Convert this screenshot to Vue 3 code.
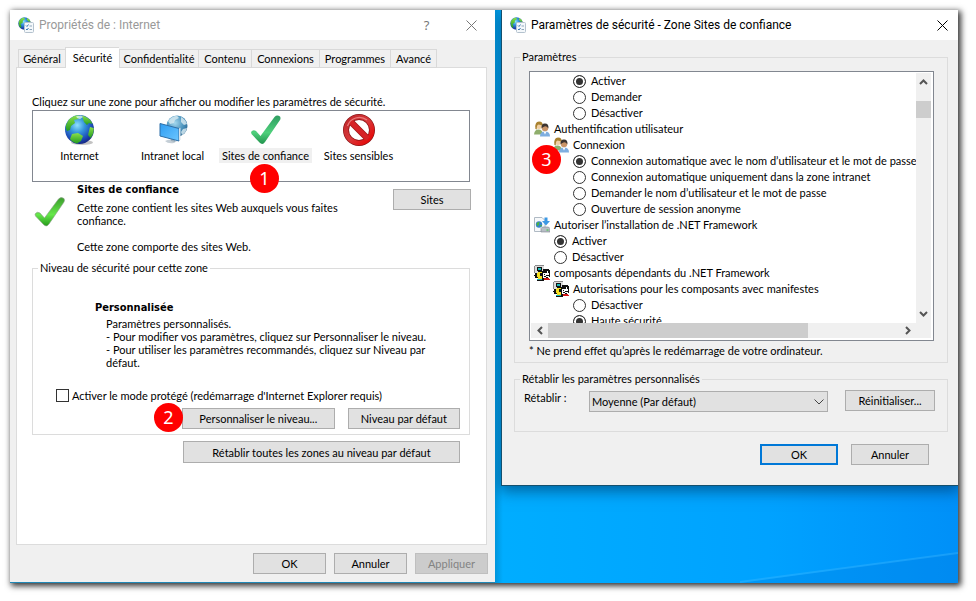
<script setup>
import { ref } from 'vue'

const tabs = ['Général', 'Sécurité', 'Confidentialité', 'Contenu', 'Connexions', 'Programmes', 'Avancé']
const activeTab = ref('Sécurité')

const zones = [
  { id: 'internet', label: 'Internet' },
  { id: 'intranet', label: 'Intranet local' },
  { id: 'trusted', label: 'Sites de confiance' },
  { id: 'restricted', label: 'Sites sensibles' }
]
const activeZone = ref('trusted')
const protectedMode = ref(false)

const rows = [
  { level: 2, group: 'a', label: 'Activer', on: true },
  { level: 2, group: 'a', label: 'Demander' },
  { level: 2, group: 'a', label: 'Désactiver' },
  { level: 0, icon: 'users', label: 'Authentification utilisateur' },
  { level: 1, icon: 'users', label: 'Connexion' },
  { level: 2, group: 'b', label: 'Connexion automatique avec le nom d’utilisateur et le mot de passe', on: true },
  { level: 2, group: 'b', label: 'Connexion automatique uniquement dans la zone intranet' },
  { level: 2, group: 'b', label: 'Demander le nom d’utilisateur et le mot de passe' },
  { level: 2, group: 'b', label: 'Ouverture de session anonyme' },
  { level: 0, icon: 'install', label: 'Autoriser l’installation de .NET Framework' },
  { level: 1, group: 'c', label: 'Activer', on: true },
  { level: 1, group: 'c', label: 'Désactiver' },
  { level: 0, icon: 'net', label: 'composants dépendants du .NET Framework' },
  { level: 1, icon: 'net', label: 'Autorisations pour les composants avec manifestes' },
  { level: 2, group: 'd', label: 'Désactiver' },
  { level: 2, group: 'd', label: 'Haute sécurité', on: true }
]
</script>

<template>
  <svg class="defs" width="0" height="0" aria-hidden="true">
    <defs>
      <radialGradient id="sea" cx="42%" cy="35%" r="65%">
        <stop offset="0" stop-color="#8fe0ff" />
        <stop offset=".4" stop-color="#3595dc" />
        <stop offset=".8" stop-color="#1b48b4" />
        <stop offset="1" stop-color="#162a88" />
      </radialGradient>
      <radialGradient id="ice" cx="40%" cy="35%" r="70%">
        <stop offset="0" stop-color="#a4d8ee" />
        <stop offset=".6" stop-color="#4b93bd" />
        <stop offset="1" stop-color="#2a6490" />
      </radialGradient>
      <linearGradient id="land" x1="0" y1="0" x2="0" y2="1">
        <stop offset="0" stop-color="#8be04a" />
        <stop offset="1" stop-color="#229a20" />
      </linearGradient>
      <linearGradient id="screen" x1="0" y1="0" x2="1" y2="1">
        <stop offset="0" stop-color="#2f9df2" />
        <stop offset="1" stop-color="#6cc6ff" />
      </linearGradient>
      <linearGradient id="tickSoft" x1="0" y1="0" x2="0" y2="1">
        <stop offset="0" stop-color="#2f9d62" />
        <stop offset=".6" stop-color="#4fd07c" />
        <stop offset="1" stop-color="#22944e" />
      </linearGradient>
      <linearGradient id="tickBright" x1="0" y1="0" x2="0" y2="1">
        <stop offset="0" stop-color="#3a9c2c" />
        <stop offset=".6" stop-color="#66e84a" />
        <stop offset="1" stop-color="#259a1a" />
      </linearGradient>
      <linearGradient id="ban" x1="0" y1="0" x2="1" y2="1">
        <stop offset="0" stop-color="#c0282c" />
        <stop offset=".5" stop-color="#d8383a" />
        <stop offset="1" stop-color="#e80000" />
      </linearGradient>

      <symbol id="i-app" viewBox="0 0 16 16">
        <circle cx="6.5" cy="6.5" r="6.2" fill="url(#sea)" />
        <path d="M1 4Q3 .8 6 .5L7 2 5 3.600 4.500 6 2.500 7 3.500 9.500 2.500 11Q0 8 1 4ZM9 1Q12 2 12.600 5L10.500 4.500 9 3Z" fill="url(#land)" />
        <rect x="6.500" y="5.500" width="9" height="10" rx="1" fill="#f4f8fb" stroke="#b4c2ce" />
        <path d="M8 8.500l1 1 1.500-2M8 12l1 1 1.500-2" fill="none" stroke="#3678b8" />
        <path d="M11.500 9h2.500M11.500 12.500h2.500" stroke="#8fa6bb" />
      </symbol>
      <symbol id="i-internet" viewBox="0 0 32 32">
        <ellipse cx="18" cy="28.500" rx="11" ry="2.500" fill="#9a9a9a" opacity=".6" />
        <circle cx="15.500" cy="15.500" r="14.500" fill="url(#sea)" />
        <path d="M2 11Q5 3 13 1.300L16 2 14 5 10 6 11 9 7 12 6 16 3 17Q1 14 2 11Z" fill="url(#land)" />
        <path d="M18 1.500Q24 3 27 7L28.500 10 25 9 23 11 20 8 19 5Z" fill="url(#land)" />
        <path d="M26 13L29.700 14Q30 20 26.500 24L24 21 25 17Z" fill="url(#land)" />
        <path d="M8 20L14 19 19 22 17 27 13 29.500Q8 28 6 25Z" fill="url(#land)" />
        <path d="M12 2.200L17 1.500 19 3 16 5 13 4Z" fill="#d8f4e8" opacity=".8" />
      </symbol>
      <symbol id="i-intranet" viewBox="0 0 32 32">
        <circle cx="20" cy="12" r="10.500" fill="url(#ice)" />
        <path d="M11 7Q15 2 20 1.800L22 4 18 6 17 9 13 10ZM24 3Q29 6 30 10L27 11 24 8ZM26 15L30 14Q29 19 25 21L24 18Z" fill="#d4e8f0" opacity=".85" />
        <path d="M8 27Q13 24 20 27L17 29Q11 30 8 27Z" fill="#c4ced6" />
        <path d="M13 22l5 2v4l-4-1z" fill="#9fb0bc" />
        <path d="M3 9.500L22 14.500V27L3 22Z" fill="url(#screen)" stroke="#2f6fa8" />
        <path d="M22 14.500l1.500-.8V25.500L22 27Z" fill="#d8e4ec" />
      </symbol>
      <symbol id="i-trusted" viewBox="0 0 32 32">
        <path d="M1 18Q3 15 6 17L10.500 22 24.500 3Q27 .5 30 2.500 31 4 30 6L15 28Q12.500 31.500 9.500 28.500L1.500 20Z" fill="url(#tickSoft)" />
      </symbol>
      <symbol id="i-check" viewBox="0 0 32 32">
        <path d="M1 18Q3 15 6 17L10.500 22 24.500 3Q27 .5 30 2.500 31 4 30 6L15 28Q12.500 31.500 9.500 28.500L1.500 20Z" fill="url(#tickBright)" stroke="#8a9a86" stroke-width=".6" />
      </symbol>
      <symbol id="i-restricted" viewBox="0 0 32 32">
        <circle cx="16" cy="16" r="13" fill="#fff" stroke="#8c1416" stroke-width="6" />
        <path d="M7.500 7.500L24.500 24.500" stroke="#9c1416" stroke-width="6.400" />
        <circle cx="16" cy="16" r="13" fill="none" stroke="url(#ban)" stroke-width="4.600" />
        <path d="M7 7L25 25" stroke="#d62226" stroke-width="5" />
        <path d="M4.500 12A12.500 12.500 0 0 1 24 6" fill="none" stroke="#f09090" stroke-width="1.200" opacity=".8" />
      </symbol>
      <symbol id="i-users" viewBox="0 0 16 16">
        <path d="M0 13.500Q.5 8.500 4.500 8.500T9 13.500Z" fill="#8fae6c" />
        <circle cx="5" cy="4.500" r="3.400" fill="#f0cfa4" />
        <path d="M1.400 8Q.6 .5 5 .5T8.600 5Q7 3.500 4.500 3.500 2.500 4 2.800 8.500Z" fill="#a9822f" />
        <path d="M6 15.500Q6 10.500 11 10.500T16 15.500Z" fill="#7eaee0" />
        <path d="M9.500 10.500l1.500 3 1.500-3z" fill="#fff" />
        <circle cx="11" cy="7" r="3.200" fill="#c99468" />
        <path d="M7.600 7.500Q7 2.500 11 2.600T14.400 7.500Q13 5 10.500 5.400 8.800 5.600 7.600 7.500Z" fill="#3c3430" />
      </symbol>
      <symbol id="i-install" viewBox="0 0 16 16">
        <path d="M.5.5H8L11 3.500V14.500H.5Z" fill="#f7f9fb" stroke="#b0bac4" />
        <circle cx="5" cy="7.500" r="3.200" fill="#3784cc" />
        <path d="M2.500 6.500Q4 4.500 5.500 5L5 7.500 3.500 9.500ZM6 8l2 0-1 2z" fill="#4db43c" />
        <path d="M10.500.5h3V4H16L12 8.500 8 4h2.500z" fill="#3c98e4" />
        <path d="M7 11.500l1.500-1.500h6l1.500 1.500v3.500H7z" fill="#b8bec6" stroke="#7d858e" stroke-width=".6" />
        <path d="M12.500 13h2" stroke="#37c837" />
      </symbol>
      <symbol id="i-net" viewBox="0 0 16 16" shape-rendering="crispEdges">
        <path d="M1 0H10V1H1ZM0 1H1V8H0Z" fill="#8a8a8a" />
        <path d="M1 1H10V8H1Z" fill="#dcdcdc" />
        <path d="M3 2H8V6H3Z" fill="#111" />
        <path d="M4 3H7V5H4Z" fill="#18b8b8" />
        <path d="M1 8H4V10H1ZM0 10H3V11H0ZM1 11H4V13H1Z" fill="#111" />
        <path d="M4 6H9V14H4ZM9 4H15V8H9ZM15 5H16V12H15Z" fill="#111" />
        <path d="M4 7H8V8H4ZM3 8H6V12H3ZM4 12H8V14H4ZM6 11H8V12H6Z" fill="#f6e020" />
        <path d="M9 8H13V13H9ZM13 6H14V10H13Z" fill="#fff" />
        <path d="M10 9H11V10H10ZM12 10H15V11H12ZM10 11H12V12H10Z" fill="#111" />
        <path d="M3 14H8V15H3Z" fill="#18b8b8" />
        <path d="M3 15H9V16H3ZM8 13H10V16H8ZM12 12H14V13H12Z" fill="#111" />
        <path d="M10 13H15V14H16V15H10Z" fill="#d01818" />
      </symbol>
    </defs>
  </svg>

  <main class="desktop">
    <svg class="ray" viewBox="0 0 215 32" preserveAspectRatio="none" aria-hidden="true">
      <path d="M0 32L215 2V32Z" fill="#007fe0" opacity=".3" />
      <path d="M0 31L215 2" stroke="#3cb8ff" stroke-width="2" opacity=".4" />
    </svg>

    <section class="window internet">
      <header class="titlebar muted">
        <svg class="app-icon"><use href="#i-app" /></svg>
        <h1>Propriétés de : Internet</h1>
        <button class="caption help" type="button" aria-label="Aide">?</button>
        <button class="caption" type="button" aria-label="Fermer">
          <svg width="11" height="11" viewBox="0 0 11 11"><path d="M.5.500l10 10M10.500.500l-10 10" /></svg>
        </button>
      </header>

      <div class="tabs" role="tablist">
        <button
          v-for="t in tabs"
          :key="t"
          type="button"
          role="tab"
          class="tab"
          :class="{ active: t === activeTab }"
          :aria-selected="t === activeTab"
          @click="activeTab = t"
        >{{ t }}</button>
      </div>

      <div class="panel">
        <p class="intro">Cliquez sur une zone pour afficher ou modifier les paramètres de sécurité.</p>
        <div class="zones">
          <button
            v-for="z in zones"
            :key="z.id"
            type="button"
            class="zone"
            :class="{ active: z.id === activeZone }"
            @click="activeZone = z.id"
          >
            <svg class="zone-icon"><use :href="'#i-' + z.id" /></svg>
            <span>{{ z.label }}</span>
          </button>
          <span class="badge one">1</span>
        </div>

        <div class="detail">
          <svg class="zone-icon"><use href="#i-check" /></svg>
          <div class="detail-text">
            <h2>Sites de confiance</h2>
            <p>Cette zone contient les sites Web auxquels vous faites<br>confiance.<br><br>Cette zone comporte des sites Web.</p>
          </div>
          <button class="btn sites" type="button">Sites</button>
        </div>

        <fieldset class="level">
          <legend>Niveau de sécurité pour cette zone</legend>
          <div class="custom">
            <h2>Personnalisée</h2>
            <p>Paramètres personnalisés.<br>- Pour modifier vos paramètres, cliquez sur Personnaliser le niveau.<br>- Pour utiliser les paramètres recommandés, cliquez sur Niveau par<br>défaut.</p>
          </div>
          <label class="protect">
            <input v-model="protectedMode" type="checkbox">
            Activer le mode protégé (redémarrage d'Internet Explorer requis)
          </label>
          <div class="level-buttons">
            <button class="btn wide" type="button">Personnaliser le niveau...</button>
            <button class="btn mid" type="button">Niveau par défaut</button>
            <span class="badge two">2</span>
          </div>
        </fieldset>
        <div class="reset-row">
          <button class="btn" type="button">Rétablir toutes les zones au niveau par défaut</button>
        </div>
      </div>

      <footer class="footer">
        <button class="btn" type="button">OK</button>
        <button class="btn" type="button">Annuler</button>
        <button class="btn" type="button" disabled>Appliquer</button>
      </footer>
    </section>

    <section class="window security">
      <header class="titlebar">
        <svg class="app-icon"><use href="#i-app" /></svg>
        <h1>Paramètres de sécurité - Zone Sites de confiance</h1>
        <button class="caption" type="button" aria-label="Fermer">
          <svg width="11" height="11" viewBox="0 0 11 11"><path d="M.5.500l10 10M10.500.500l-10 10" /></svg>
        </button>
      </header>

      <div class="content">
        <fieldset class="settings">
          <legend>Paramètres</legend>
          <div class="tree">
            <div class="rows">
              <component
                :is="r.group ? 'label' : 'div'"
                v-for="(r, i) in rows"
                :key="i"
                class="row"
                :class="'level-' + r.level"
              >
                <input v-if="r.group" type="radio" :name="'setting-' + r.group" :checked="r.on">
                <svg v-else class="row-icon"><use :href="'#i-' + r.icon" /></svg>
                <span>{{ r.label }}</span>
              </component>
            </div>
            <div class="vbar">
              <button type="button" aria-label="Défiler vers le haut"><svg width="9" height="6" viewBox="0 0 9 6"><path d="M1 5l3.500-3.500L8 5" /></svg></button>
              <div class="track"><div class="thumb"></div></div>
              <button type="button" aria-label="Défiler vers le bas"><svg width="9" height="6" viewBox="0 0 9 6"><path d="M1 1l3.500 3.500L8 1" /></svg></button>
            </div>
            <div class="hbar">
              <button type="button" aria-label="Défiler vers la gauche"><svg width="6" height="9" viewBox="0 0 6 9"><path d="M5 1L1.500 4.500 5 8" /></svg></button>
              <div class="track"><div class="thumb"></div></div>
              <button type="button" aria-label="Défiler vers la droite"><svg width="6" height="9" viewBox="0 0 6 9"><path d="M1 1l3.500 3.500L1 8" /></svg></button>
            </div>
            <div class="corner"></div>
            <span class="badge three">3</span>
          </div>
          <p class="note">* Ne prend effet qu’après le redémarrage de votre ordinateur.</p>
        </fieldset>

        <fieldset class="restore">
          <legend>Rétablir les paramètres personnalisés</legend>
          <div class="restore-row">
            <label for="restore-level">Rétablir :</label>
            <span class="select">
              <select id="restore-level">
                <option>Moyenne (Par défaut)</option>
              </select>
              <svg width="10" height="6" viewBox="0 0 10 6"><path d="M.5.500L5 5 9.500.500" /></svg>
            </span>
            <button class="btn" type="button">Réinitialiser...</button>
          </div>
        </fieldset>

        <div class="actions">
          <button class="btn primary" type="button">OK</button>
          <button class="btn" type="button">Annuler</button>
        </div>
      </div>
    </section>
  </main>
</template>

<style>
body {
  background: #fff;
}
</style>

<style scoped>
.defs {
  position: absolute;
}
.desktop,
.desktop button,
.desktop select {
  font-family: Tahoma, Lato, sans-serif;
  font-size: 11px;
  color: #000;
}
.desktop {
  position: relative;
  display: grid;
  grid-template-columns: 485fr 456fr;
  column-gap: 7px;
  margin: 10px 18px 18px 10px;
  line-height: 13px;
  background: linear-gradient(90deg, #0090d4 51%, #00adff 52%, #00a2ff 80%, #0090f8);
  box-shadow: 2px 2px 6px 1px rgba(0, 0, 0, .8);
}
.ray {
  position: absolute;
  right: 0;
  bottom: 0;
  width: 23%;
  height: 32px;
}
h1,
h2,
p {
  margin: 0;
}
h2 {
  font: bold 11px/14px Tahoma, "DejaVu Sans Condensed", sans-serif;
  font-stretch: condensed;
}
.window {
  position: relative;
  min-width: 0;
  background: #f0f0f0;
}
.internet {
  border-bottom: 1px solid #1f87b5;
}
.security {
  align-self: start;
  box-shadow: 0 0 0 1px #14506e, 0 4px 14px 2px rgba(0, 50, 90, .6);
  clip-path: inset(0 0 -30px -7px);
}
.titlebar {
  display: flex;
  align-items: center;
  height: 30px;
  padding: 0 10px 0 8px;
  background: #fff;
}
.titlebar h1 {
  flex: 1;
  padding-left: 5px;
  font: 12px/16px "Segoe UI", Roboto, sans-serif;
  white-space: nowrap;
}
.app-icon {
  width: 16px;
  height: 16px;
}
.caption {
  width: 11px;
  height: 16px;
  padding: 0;
  border: 0;
  background: none;
  line-height: 0;
}
.caption path {
  fill: none;
  stroke: #000;
  stroke-width: 1;
}
.desktop .help {
  margin-right: 34px;
  font: 13px/16px "Noto Sans", sans-serif;
  color: #777;
}
.muted {
  padding-right: 18px;
}
.muted h1 {
  color: #999;
}
.muted .caption path {
  stroke: #777;
}
.tabs {
  display: grid;
  grid-template-columns: 47px 54px 79px 53px 68px 71px 47px;
  align-items: end;
  height: 28px;
  padding: 0 8px;
  margin-bottom: -1px;
}
.tab {
  height: 19px;
  padding: 0;
  border: 1px solid #d9d9d9;
  border-right: 0;
  background: #f0f0f0;
  line-height: 17px;
  white-space: nowrap;
}
.tab:last-child {
  border-right: 1px solid #d9d9d9;
}
.tab.active {
  position: relative;
  height: 21px;
  padding-bottom: 2px;
  border-bottom: 0;
  background: #fff;
}
.panel {
  margin: 0 8px 0 6px;
  padding: 27px 16px 81px 15px;
  border: 1px solid #dcdcdc;
  background: #fff;
}
.intro {
  margin-bottom: 1px;
  line-height: 14px;
  white-space: nowrap;
}
.zones {
  position: relative;
  display: flex;
  height: 70px;
  border: 1px solid #828790;
}
.zone {
  display: flex;
  flex-direction: column;
  align-items: center;
  width: 93px;
  padding: 3px 0 0;
  border: 0;
  background: none;
  white-space: nowrap;
}
.zone-icon {
  flex: none;
  width: 32px;
  height: 32px;
}
.zone span {
  margin-top: 2px;
  padding: 0 3px;
  line-height: 15px;
}
.zone.active span {
  background: #f0f0f0;
}
.badge {
  position: absolute;
  width: 29px;
  height: 29px;
  border-radius: 50%;
  background: #f00;
  color: #fff;
  font: 18px/28px "Noto Sans", sans-serif;
  text-align: center;
}
.one {
  left: 217px;
  top: 53px;
}
.two {
  left: -28px;
  top: -5px;
}
.three {
  left: 2px;
  top: 73px;
}
.detail {
  display: flex;
  align-items: flex-start;
  padding: 1px 0 0 2px;
  margin-right: -1px;
}
.detail .zone-icon {
  margin-top: 13px;
}
.detail-text {
  flex: 1;
  padding-left: 11px;
  white-space: nowrap;
}
.detail-text p {
  margin-top: 4px;
}
.btn {
  height: 21px;
  padding: 0;
  border: 1px solid #adadad;
  background: #e1e1e1;
  white-space: nowrap;
}
.btn:disabled {
  border-color: #bfbfbf;
  background: #ccc;
  color: #838383;
}
.btn.primary {
  border: 2px solid #0078d7;
}
.sites {
  width: 78px;
  margin-top: 6px;
}
fieldset {
  min-width: 0;
  margin: 0;
  border: 1px solid #dcdcdc;
}
legend {
  padding: 0 2px;
  line-height: 14px;
}
.level {
  margin-top: 8px;
  padding: 0 9px 5px 5px;
}
.custom {
  padding: 26px 0 0 57px;
  white-space: nowrap;
}
.custom p {
  padding: 2px 0 0 11px;
}
.protect {
  display: flex;
  align-items: center;
  gap: 3px;
  height: 13px;
  margin: 20px 0 6px 18px;
  white-space: nowrap;
}
input {
  flex: none;
  width: 13px;
  height: 13px;
  margin: 0;
  appearance: none;
  border: 1px solid #333;
  background: #fff;
}
input[type="radio"] {
  border-radius: 50%;
}
input:checked {
  background: #333;
  box-shadow: inset 0 0 0 2px #fff;
}
.level-buttons {
  position: relative;
  display: flex;
  justify-content: flex-end;
  gap: 13px;
  margin-left: 144px;
}
.wide {
  flex: 153;
}
.mid {
  flex: 112;
}
.reset-row {
  display: grid;
  margin: 6px 10px 0 151px;
}
.reset-row .btn {
  height: 22px;
}
.footer {
  display: flex;
  justify-content: flex-end;
  gap: 8px;
  padding: 8px 7px 8px;
}
.footer .btn {
  width: 73px;
}
.content {
  padding: 10px 10px 20px 12px;
}
.settings {
  padding: 7px 13px 4px 14px;
}
.settings legend {
  margin-left: -9px;
}
.tree {
  position: relative;
  display: grid;
  grid-template-columns: 1fr 15px;
  grid-template-rows: 250px 15px;
  padding: 1px 2px 2px 1px;
  border: 1px solid #828790;
  background: #fff;
}
.rows {
  overflow: hidden;
}
.row {
  display: flex;
  align-items: center;
  height: 16px;
  white-space: nowrap;
}
.row-icon {
  flex: none;
  width: 16px;
  height: 16px;
}
.row span {
  padding: 0 0 2px 4px;
}
.row input {
  margin-left: 1px;
}
.row input + span {
  padding-left: 5px;
}
.level-0 {
  padding-left: 3px;
}
.level-1 {
  padding-left: 22px;
}
.level-2 {
  padding-left: 41px;
}
.vbar,
.hbar {
  display: flex;
  background: #f0f0f0;
}
.vbar {
  flex-direction: column;
}
.vbar button,
.hbar button {
  display: flex;
  align-items: center;
  justify-content: center;
  width: 17px;
  height: 15px;
  padding: 0;
  border: 0;
  background: none;
}
.vbar button {
  width: 15px;
  height: 18px;
}
.vbar path,
.hbar path {
  fill: none;
  stroke: #555;
  stroke-width: 2;
}
.track {
  flex: 1;
}
.thumb {
  background: #cdcdcd;
}
.vbar .thumb {
  height: 17px;
  margin-top: 10px;
}
.hbar .thumb {
  width: 74%;
  height: 15px;
}
.corner {
  background: #f0f0f0;
}
.note {
  padding-top: 3px;
  line-height: 14px;
  white-space: nowrap;
}
.restore {
  margin-top: 9px;
  padding: 4px 12px 19px 5px;
}
.restore-row {
  display: flex;
  align-items: flex-start;
}
.restore-row label {
  width: 65px;
  padding: 1px 0 0 4px;
  box-sizing: border-box;
}
.select {
  position: relative;
  flex: 1;
  display: flex;
  margin: 1px 17px 0 4px;
}
.select select {
  width: 100%;
  height: 21px;
  padding: 0 2px;
  border: 1px solid #adadad;
  border-radius: 0;
  background: #e1e1e1;
  appearance: none;
}
.select svg {
  position: absolute;
  right: 4px;
  top: 8px;
  pointer-events: none;
}
.select path {
  fill: none;
  stroke: #444;
}
.restore .btn {
  width: 90px;
}
.actions {
  display: flex;
  justify-content: flex-end;
  gap: 13px;
  padding: 12px 19px 0 0;
}
.actions .btn {
  width: 78px;
}
</style>
